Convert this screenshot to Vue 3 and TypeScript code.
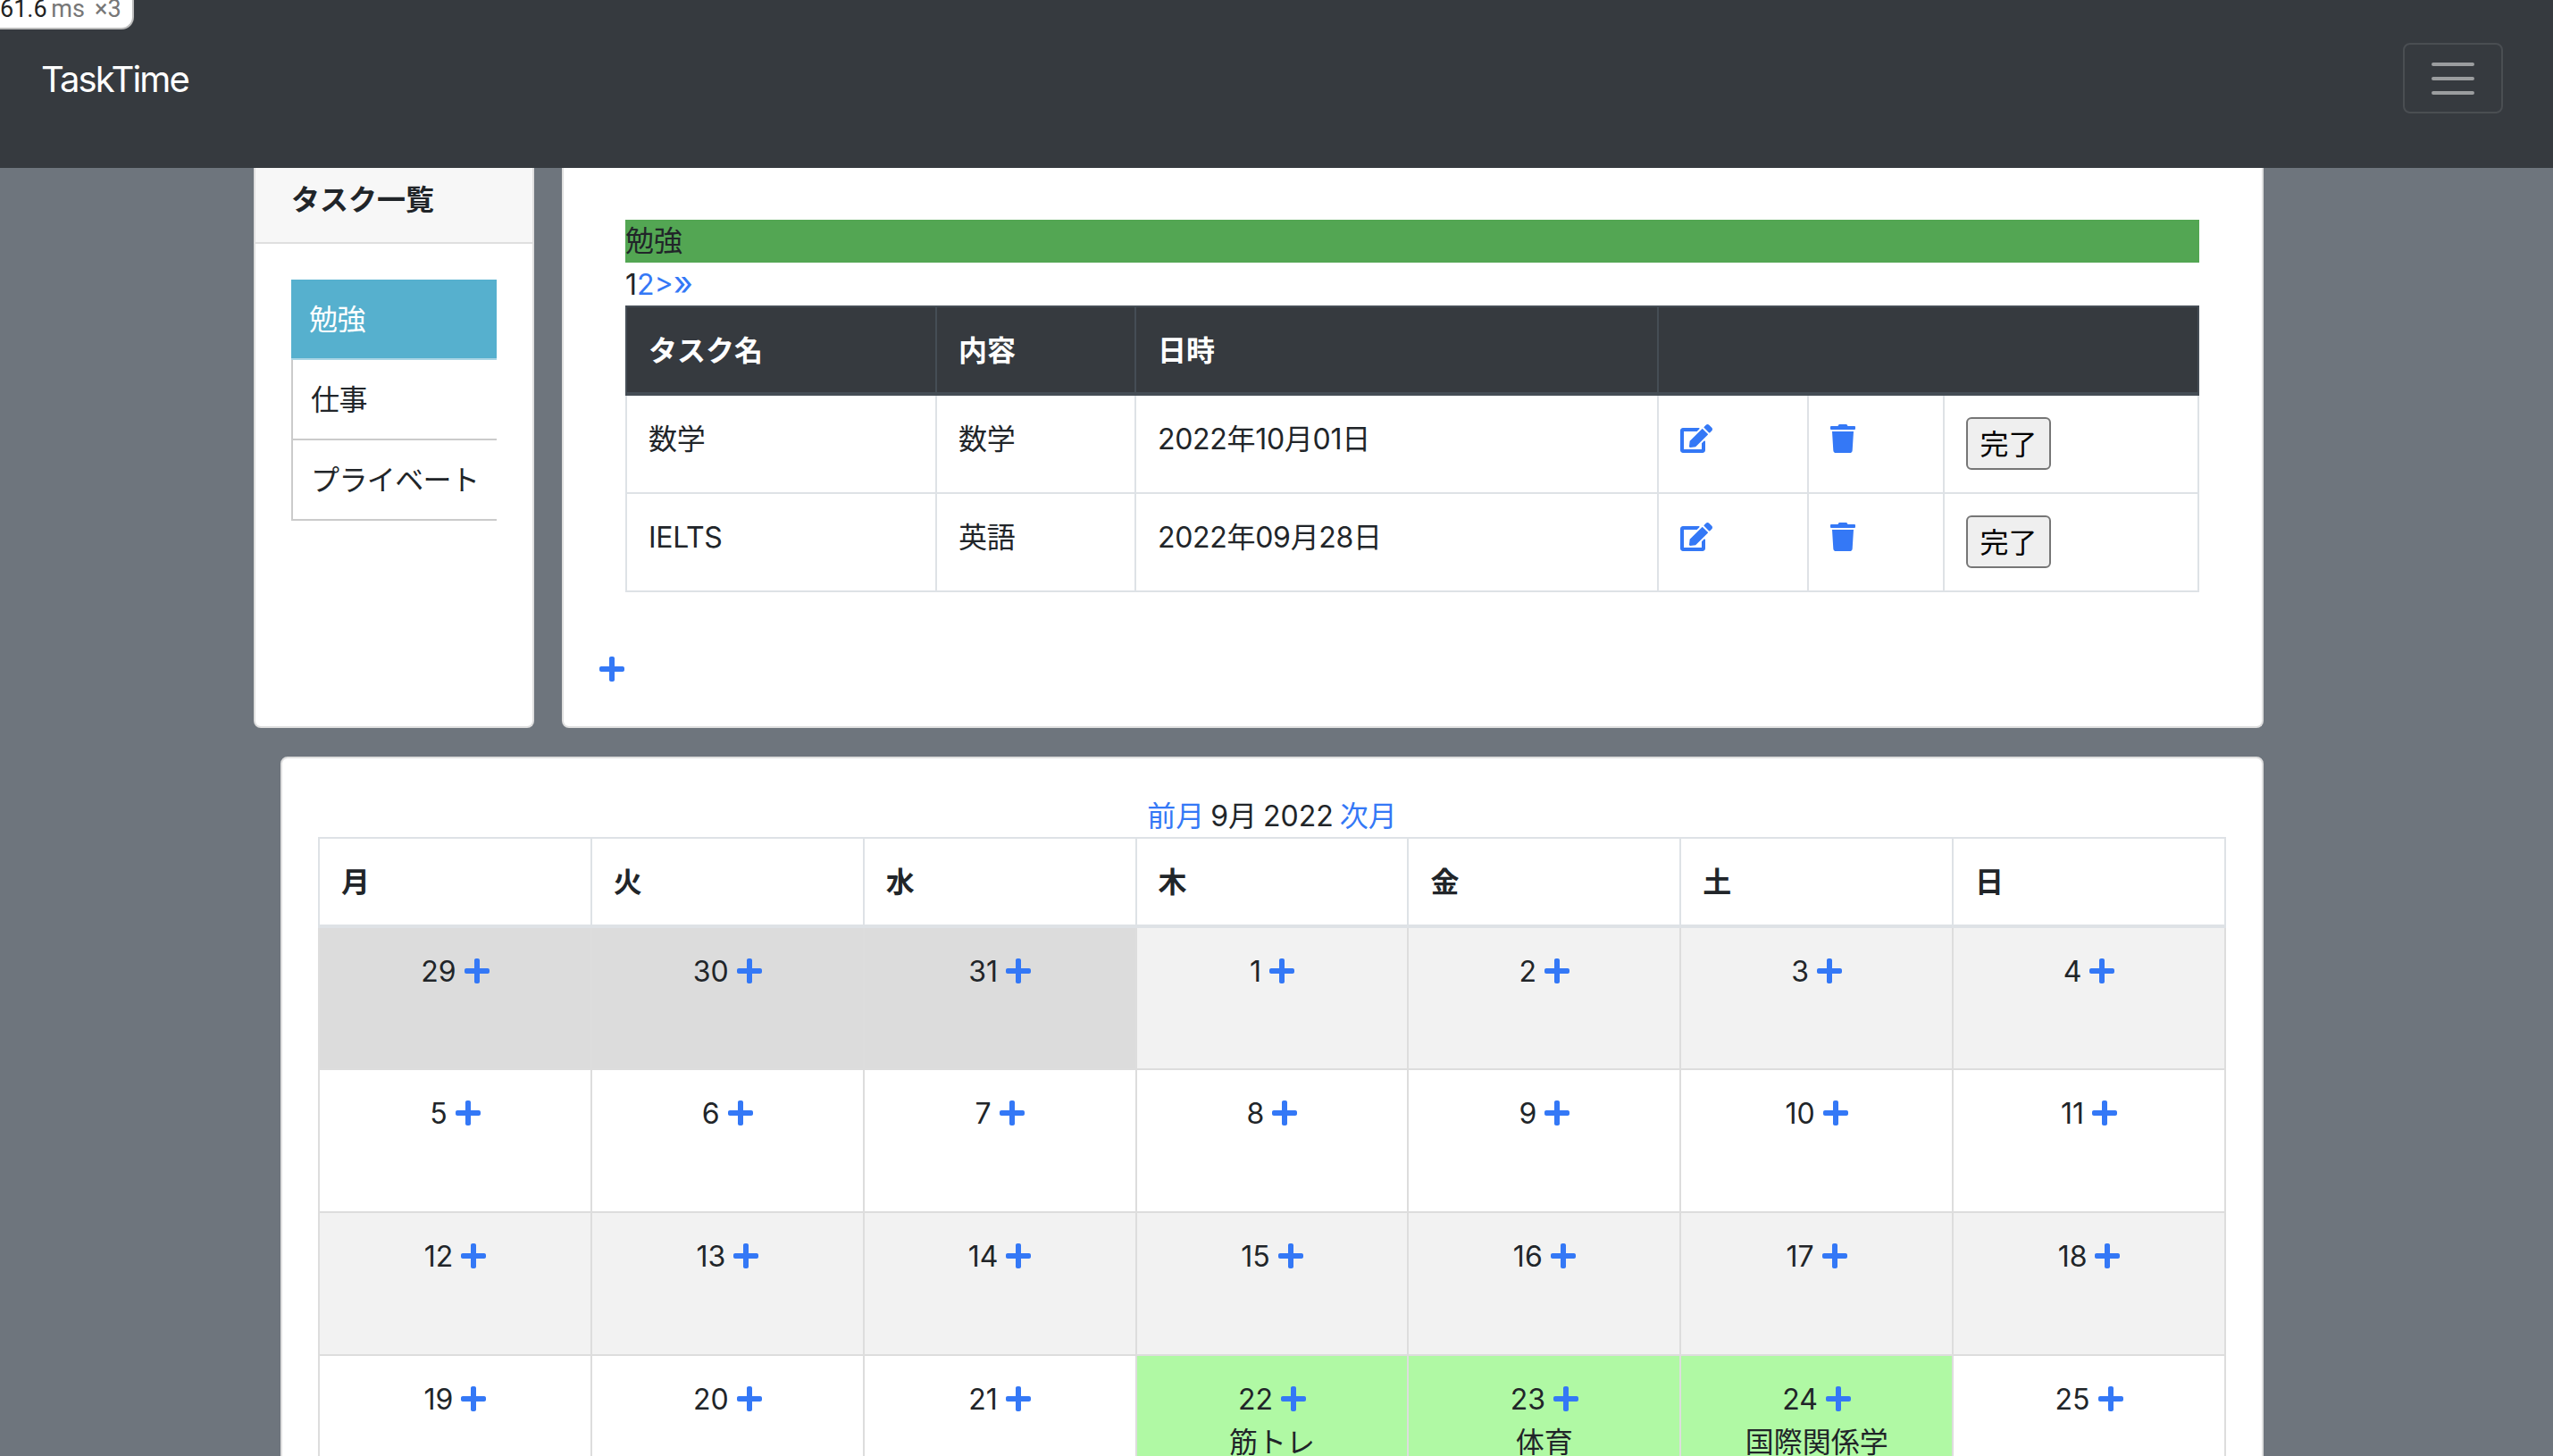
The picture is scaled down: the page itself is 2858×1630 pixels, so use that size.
<script setup lang="ts">
import { ref } from "vue";

const PLUS =
  "M416 208H272V64c0-17.67-14.33-32-32-32h-32c-17.67 0-32 14.33-32 32v144H32c-17.67 0-32 14.33-32 32v32c0 17.67 14.33 32 32 32h144v144c0 17.67 14.33 32 32 32h32c17.67 0 32-14.33 32-32V304h144c17.67 0 32-14.33 32-32v-32c0-17.67-14.33-32-32-32z";
const TRASH =
  "M432 32H312l-9.4-18.7A24 24 0 0 0 281.1 0H166.8a23.72 23.72 0 0 0-21.4 13.3L136 32H16A16 16 0 0 0 0 48v32a16 16 0 0 0 16 16h416a16 16 0 0 0 16-16V48a16 16 0 0 0-16-16zM53.2 467a48 48 0 0 0 47.9 45h245.8a48 48 0 0 0 47.9-45L416 128H32z";
const EDIT =
  "M402.6 83.2l90.2 90.2c3.8 3.8 3.8 10 0 13.8L274.4 405.6l-92.8 10.3c-12.4 1.4-22.9-9.1-21.5-21.5l10.3-92.8L388.8 83.2c3.8-3.8 10-3.8 13.8 0zm162-22.9l-48.8-48.8c-15.2-15.2-39.9-15.2-55.2 0l-35.4 35.4c-3.8 3.8-3.8 10 0 13.8l90.2 90.2c3.8 3.8 10 3.8 13.8 0l35.4-35.4c15.2-15.3 15.2-40 0-55.2zM384 346.2V448H64V128h229.8c3.2 0 6.2-1.3 8.5-3.5l40-40c7.6-7.6 2.2-20.5-8.5-20.5H48C21.5 64 0 85.5 0 112v352c0 26.5 21.5 48 48 48h352c26.5 0 48-21.5 48-48V306.2c0-10.7-12.9-16-20.5-8.5l-40 40c-2.2 2.3-3.5 5.3-3.5 8.5z";

interface Day {
  day: number;
  kind?: "other" | "busy";
  task?: string;
}

const categories = ["勉強", "仕事", "プライベート"];
const selected = ref("勉強");

const tasks = [
  { name: "数学", content: "数学", date: "2022年10月01日" },
  { name: "IELTS", content: "英語", date: "2022年09月28日" },
];

const weekdays = ["月", "火", "水", "木", "金", "土", "日"];

const weeks: Day[][] = [
  [
    { day: 29, kind: "other" },
    { day: 30, kind: "other" },
    { day: 31, kind: "other" },
    { day: 1 },
    { day: 2 },
    { day: 3 },
    { day: 4 },
  ],
  [5, 6, 7, 8, 9, 10, 11].map((day) => ({ day })),
  [12, 13, 14, 15, 16, 17, 18].map((day) => ({ day })),
  [
    { day: 19 },
    { day: 20 },
    { day: 21 },
    { day: 22, kind: "busy", task: "筋トレ" },
    { day: 23, kind: "busy", task: "体育" },
    { day: 24, kind: "busy", task: "国際関係学" },
    { day: 25 },
  ],
];
</script>

<template>
  <div class="app">
    <div class="timer"><span class="timer-text">61.6 <i class="unit">ms</i><i>×3</i></span></div>

    <nav class="navbar">
      <a class="brand">TaskTime</a>
      <button class="toggler" type="button">
        <svg width="60" height="60" viewBox="0 0 30 30">
          <path d="M4 7h22M4 15h22M4 23h22" stroke="rgba(255,255,255,.5)" stroke-width="2" stroke-linecap="round" />
        </svg>
      </button>
    </nav>

    <main class="page">
      <div class="top-row">
        <aside class="card side">
          <div class="side-header">タスク一覧</div>
          <ul class="side-list">
            <li v-for="c in categories" :key="c" :class="{ active: c === selected }" @click="selected = c">{{ c }}</li>
          </ul>
        </aside>

        <section class="card tasks">
          <div class="tasks-inner">
            <div class="category-bar">勉強</div>
            <div class="pager">1<a>2</a><a>&gt;</a><a class="last">»</a></div>
            <table class="task-table">
              <colgroup>
                <col class="c-name" />
                <col class="c-content" />
                <col class="c-date" />
                <col class="c-edit" />
                <col class="c-del" />
                <col />
              </colgroup>
              <thead>
                <tr>
                  <th>タスク名</th>
                  <th>内容</th>
                  <th>日時</th>
                  <th colspan="3"></th>
                </tr>
              </thead>
              <tbody>
                <tr v-for="t in tasks" :key="t.name">
                  <td>{{ t.name }}</td>
                  <td>{{ t.content }}</td>
                  <td>{{ t.date }}</td>
                  <td><svg class="icon" viewBox="0 0 576 512"><path :d="EDIT" /></svg></td>
                  <td><svg class="icon" viewBox="0 0 448 512"><path :d="TRASH" /></svg></td>
                  <td class="btn-cell"><button class="done" type="button">完了</button></td>
                </tr>
              </tbody>
            </table>
          </div>
          <div class="add-line"><svg class="icon" viewBox="0 0 448 512"><path :d="PLUS" /></svg></div>
        </section>
      </div>

      <section class="card calendar">
        <div class="month-nav"><a>前月</a> 9月 2022 <a>次月</a></div>
        <table class="cal-table">
          <thead>
            <tr>
              <th v-for="w in weekdays" :key="w">{{ w }}</th>
            </tr>
          </thead>
          <tbody>
            <tr v-for="(week, i) in weeks" :key="i">
              <td v-for="d in week" :key="d.day" :class="d.kind">
                {{ d.day }} <svg class="icon" viewBox="0 0 448 512"><path :d="PLUS" /></svg>
                <div v-if="d.task">{{ d.task }}</div>
              </td>
            </tr>
          </tbody>
        </table>
      </section>
    </main>
  </div>
</template>

<style>
html,
body {
  margin: 0;
  overflow: hidden;
}
</style>

<style scoped>
.app {
  position: relative;
  height: 1630px;
  overflow: hidden;
  background: #6e757d;
  color: #212529;
  font-family: Inter, "Noto Sans CJK JP", sans-serif;
  font-size: 32px;
  line-height: 48px;
}

a {
  color: #3478f6;
  text-decoration: none;
}

.timer {
  position: absolute;
  top: 0;
  left: 0;
  width: 150px;
  height: 33px;
  overflow: hidden;
  background: #fff;
  border-right: 2px solid #bbb;
  border-bottom: 2px solid #bbb;
  border-bottom-right-radius: 14px;
  box-sizing: border-box;
  font-family: Roboto, sans-serif;
  font-size: 27px;
  line-height: 30px;
  color: #222;
  white-space: nowrap;
}

.timer-text {
  display: block;
  margin-top: -5px;
}

.timer i {
  font-style: normal;
  color: #777;
}

.timer .unit {
  margin-left: -2px;
  margin-right: 11px;
}

.navbar {
  display: flex;
  align-items: center;
  justify-content: space-between;
  height: 188px;
  box-sizing: border-box;
  padding: 48px 56px 61px 46px;
  background: #363a3f;
}

.brand {
  color: #fff;
  font-size: 40px;
  line-height: 60px;
  letter-spacing: -1.9px;
  margin-top: 3px;
}

.toggler {
  display: block;
  box-sizing: border-box;
  width: 112px;
  height: 79px;
  padding: 8px 24px;
  background: transparent;
  border: 2px solid rgba(255, 255, 255, 0.1);
  border-radius: 8px;
}

.toggler svg {
  display: block;
}

.page {
  width: 2250px;
  margin-left: 284px;
}

.top-row {
  display: flex;
  gap: 31px;
}

.card {
  box-sizing: border-box;
  background: #fff;
  border: 2px solid #dfdfdf;
  border-radius: 8px;
}

.side,
.tasks {
  border-top: none;
  border-top-left-radius: 0;
  border-top-right-radius: 0;
}

.side {
  width: 314px;
  flex: none;
}

.side-header {
  padding: 12px 40px 23px;
  background: #f7f7f7;
  border-bottom: 2px solid #dfdfdf;
  font-weight: 700;
}

.side-list {
  list-style: none;
  margin: 40px 40px 0;
  padding: 0;
  letter-spacing: -0.6px;
}

.side-list li {
  padding: 21px 0 19px 20px;
  border-left: 2px solid #cbcbcb;
  border-bottom: 2px solid #cbcbcb;
}

.side-list li.active {
  padding-left: 20px;
  border-left: none;
  border-bottom-color: #a9d4e4;
  background: #56b0ce;
  color: #fff;
}

.tasks {
  flex: 1;
  padding: 58px 40px 39px;
}

.tasks-inner {
  margin: 0 30px 0 29px;
}

.category-bar {
  background: #53a653;
}

.pager {
  height: 47px;
  padding-top: 1px;
}

.pager .last {
  font-size: 38px;
  line-height: 0;
}

.task-table,
.cal-table {
  width: 100%;
  table-layout: fixed;
  border-collapse: collapse;
}

.task-table th,
.task-table td,
.cal-table th,
.cal-table td {
  padding: 25px 24px 23px;
  border: 2px solid #dee2e6;
  vertical-align: top;
  text-align: left;
}

.task-table td {
  letter-spacing: -0.3px;
}

.task-table th {
  padding-bottom: 22px;
  background: #363a3f;
  color: #fff;
  border-color: #454d55;
  border-bottom-width: 4px;
}

.task-table td.btn-cell {
  padding: 24px;
}

.c-name {
  width: 347px;
}
.c-content {
  width: 223px;
}
.c-date {
  width: 585px;
}
.c-edit {
  width: 168px;
}
.c-del {
  width: 152px;
}

.icon {
  display: inline-block;
  height: 32px;
  vertical-align: -4px;
  fill: #3478f6;
}

.done {
  display: block;
  box-sizing: border-box;
  width: 95px;
  height: 59px;
  margin-bottom: 1px;
  padding: 0 0 3px;
  background: #efefef;
  border: 2px solid #767676;
  border-radius: 6px;
  color: #000;
  font-family: inherit;
  font-size: 32px;
}

.add-line {
  margin-top: 63px;
}

.calendar {
  margin: 32px 0 0 30px;
  padding: 41px 40px 0;
}

.month-nav {
  height: 47px;
  text-align: center;
  word-spacing: -2px;
}

.cal-table th {
  border-bottom-width: 4px;
}

.cal-table td {
  height: 160px;
  box-sizing: border-box;
  text-align: center;
  border-color: #dddddd;
}

.cal-table tbody tr:nth-child(odd) td {
  background: #f2f2f2;
}

.cal-table tbody tr td.other {
  background: #dcdcdc;
}

.cal-table tbody tr td.busy {
  background: #b0f9a4;
}
</style>
